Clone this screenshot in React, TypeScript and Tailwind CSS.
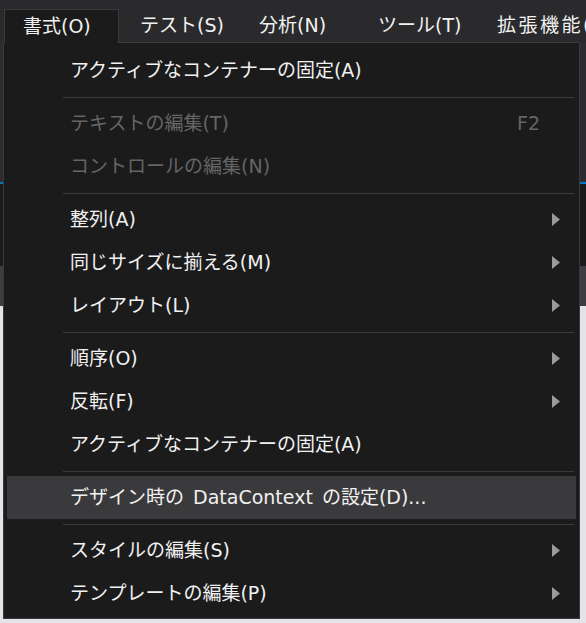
import React from 'react';

type Item =
  | { kind: 'sep' }
  | { kind: 'item'; label: string; disabled?: boolean; shortcut?: string; sub?: boolean; active?: boolean };

const items: Item[] = [
  { kind: 'item', label: 'アクティブなコンテナーの固定(A)' },
  { kind: 'sep' },
  { kind: 'item', label: 'テキストの編集(T)', disabled: true, shortcut: 'F2' },
  { kind: 'item', label: 'コントロールの編集(N)', disabled: true },
  { kind: 'sep' },
  { kind: 'item', label: '整列(A)', sub: true },
  { kind: 'item', label: '同じサイズに揃える(M)', sub: true },
  { kind: 'item', label: 'レイアウト(L)', sub: true },
  { kind: 'sep' },
  { kind: 'item', label: '順序(O)', sub: true },
  { kind: 'item', label: '反転(F)', sub: true },
  { kind: 'item', label: 'アクティブなコンテナーの固定(A)' },
  { kind: 'sep' },
  { kind: 'item', label: 'デザイン時の DataContext の設定(D)...', active: true },
  { kind: 'sep' },
  { kind: 'item', label: 'スタイルの編集(S)', sub: true },
  { kind: 'item', label: 'テンプレートの編集(P)', sub: true },
];

const font = "font-['DejaVu_Sans','Noto_Sans_CJK_JP',sans-serif]";

const SubArrow = () => (
  <svg width="8" height="13" viewBox="0 0 8 13" className="shrink-0">
    <polygon points="0,0 8,6.5 0,13" fill="#9a9a9a" />
  </svg>
);

const App: React.FC = () => {
  return (
    <div className={`relative w-[586px] h-[623px] overflow-hidden bg-[#2d2d30] ${font}`}>
      {/* メニューバー */}
      <div className="flex h-[42px] items-end text-[19px] text-[#f1f1f1] bg-[#2a2a2c]">
        <div className="relative z-10 ml-[4px] flex h-[34px] w-[115px] shrink-0 items-center pl-[18px] bg-[#1b1b1c] border-l border-t border-r border-[#3a3a3e] -mb-px pb-px">
          書式(O)
        </div>
        <div className="flex h-[34px] w-[119px] shrink-0 items-center pl-[21px] whitespace-nowrap">テスト(S)</div>
        <div className="flex h-[34px] w-[119px] shrink-0 items-center pl-[21px] whitespace-nowrap">分析(N)</div>
        <div className="flex h-[34px] w-[119px] shrink-0 items-center pl-[21px] whitespace-nowrap">ツール(T)</div>
        <div className="flex h-[34px] w-[119px] shrink-0 items-center pl-[21px] whitespace-nowrap tracking-[2.5px]">
          拡張機能(X)
        </div>
      </div>

      {/* 背後のウィンドウ */}
      <div className="flex flex-col">
        <div className="h-[140px] bg-[#2d2d30]" />
        <div className="h-[2px] bg-[#007acc]" />
        <div className="h-[82px] bg-[#1a1a1a]" />
        <div className="h-[40px] bg-[#3e3e42]" />
        <div className="h-[320px] bg-[#e4e4e6]" />
      </div>

      {/* ドロップダウン */}
      <div className="absolute left-[3px] top-[42px] w-[577px] border border-[#3a3a3e] bg-[#1b1b1c] px-[3px] pt-[6px] pb-[3px] text-[19px]">
        {items.map((it, i) =>
          it.kind === 'sep' ? (
            <div key={i} className="ml-[56px] mr-[2px] mt-[5px] mb-[4px] h-px bg-[#3a3a3e]" />
          ) : (
            <div
              key={i}
              className={`flex h-[43px] items-center pl-[63px] pr-[16px] [word-spacing:3px] ${it.active ? 'bg-[#3a3a3c]' : ''} ${
                it.disabled ? 'text-[#656565]' : 'text-[#f1f1f1]'
              }`}
            >
              <span className="flex-1 whitespace-nowrap">{it.label}</span>
              {it.shortcut && <span className="mr-[20px]">{it.shortcut}</span>}
              {it.sub && <SubArrow />}
            </div>
          )
        )}
      </div>
    </div>
  );
};

export default App;
